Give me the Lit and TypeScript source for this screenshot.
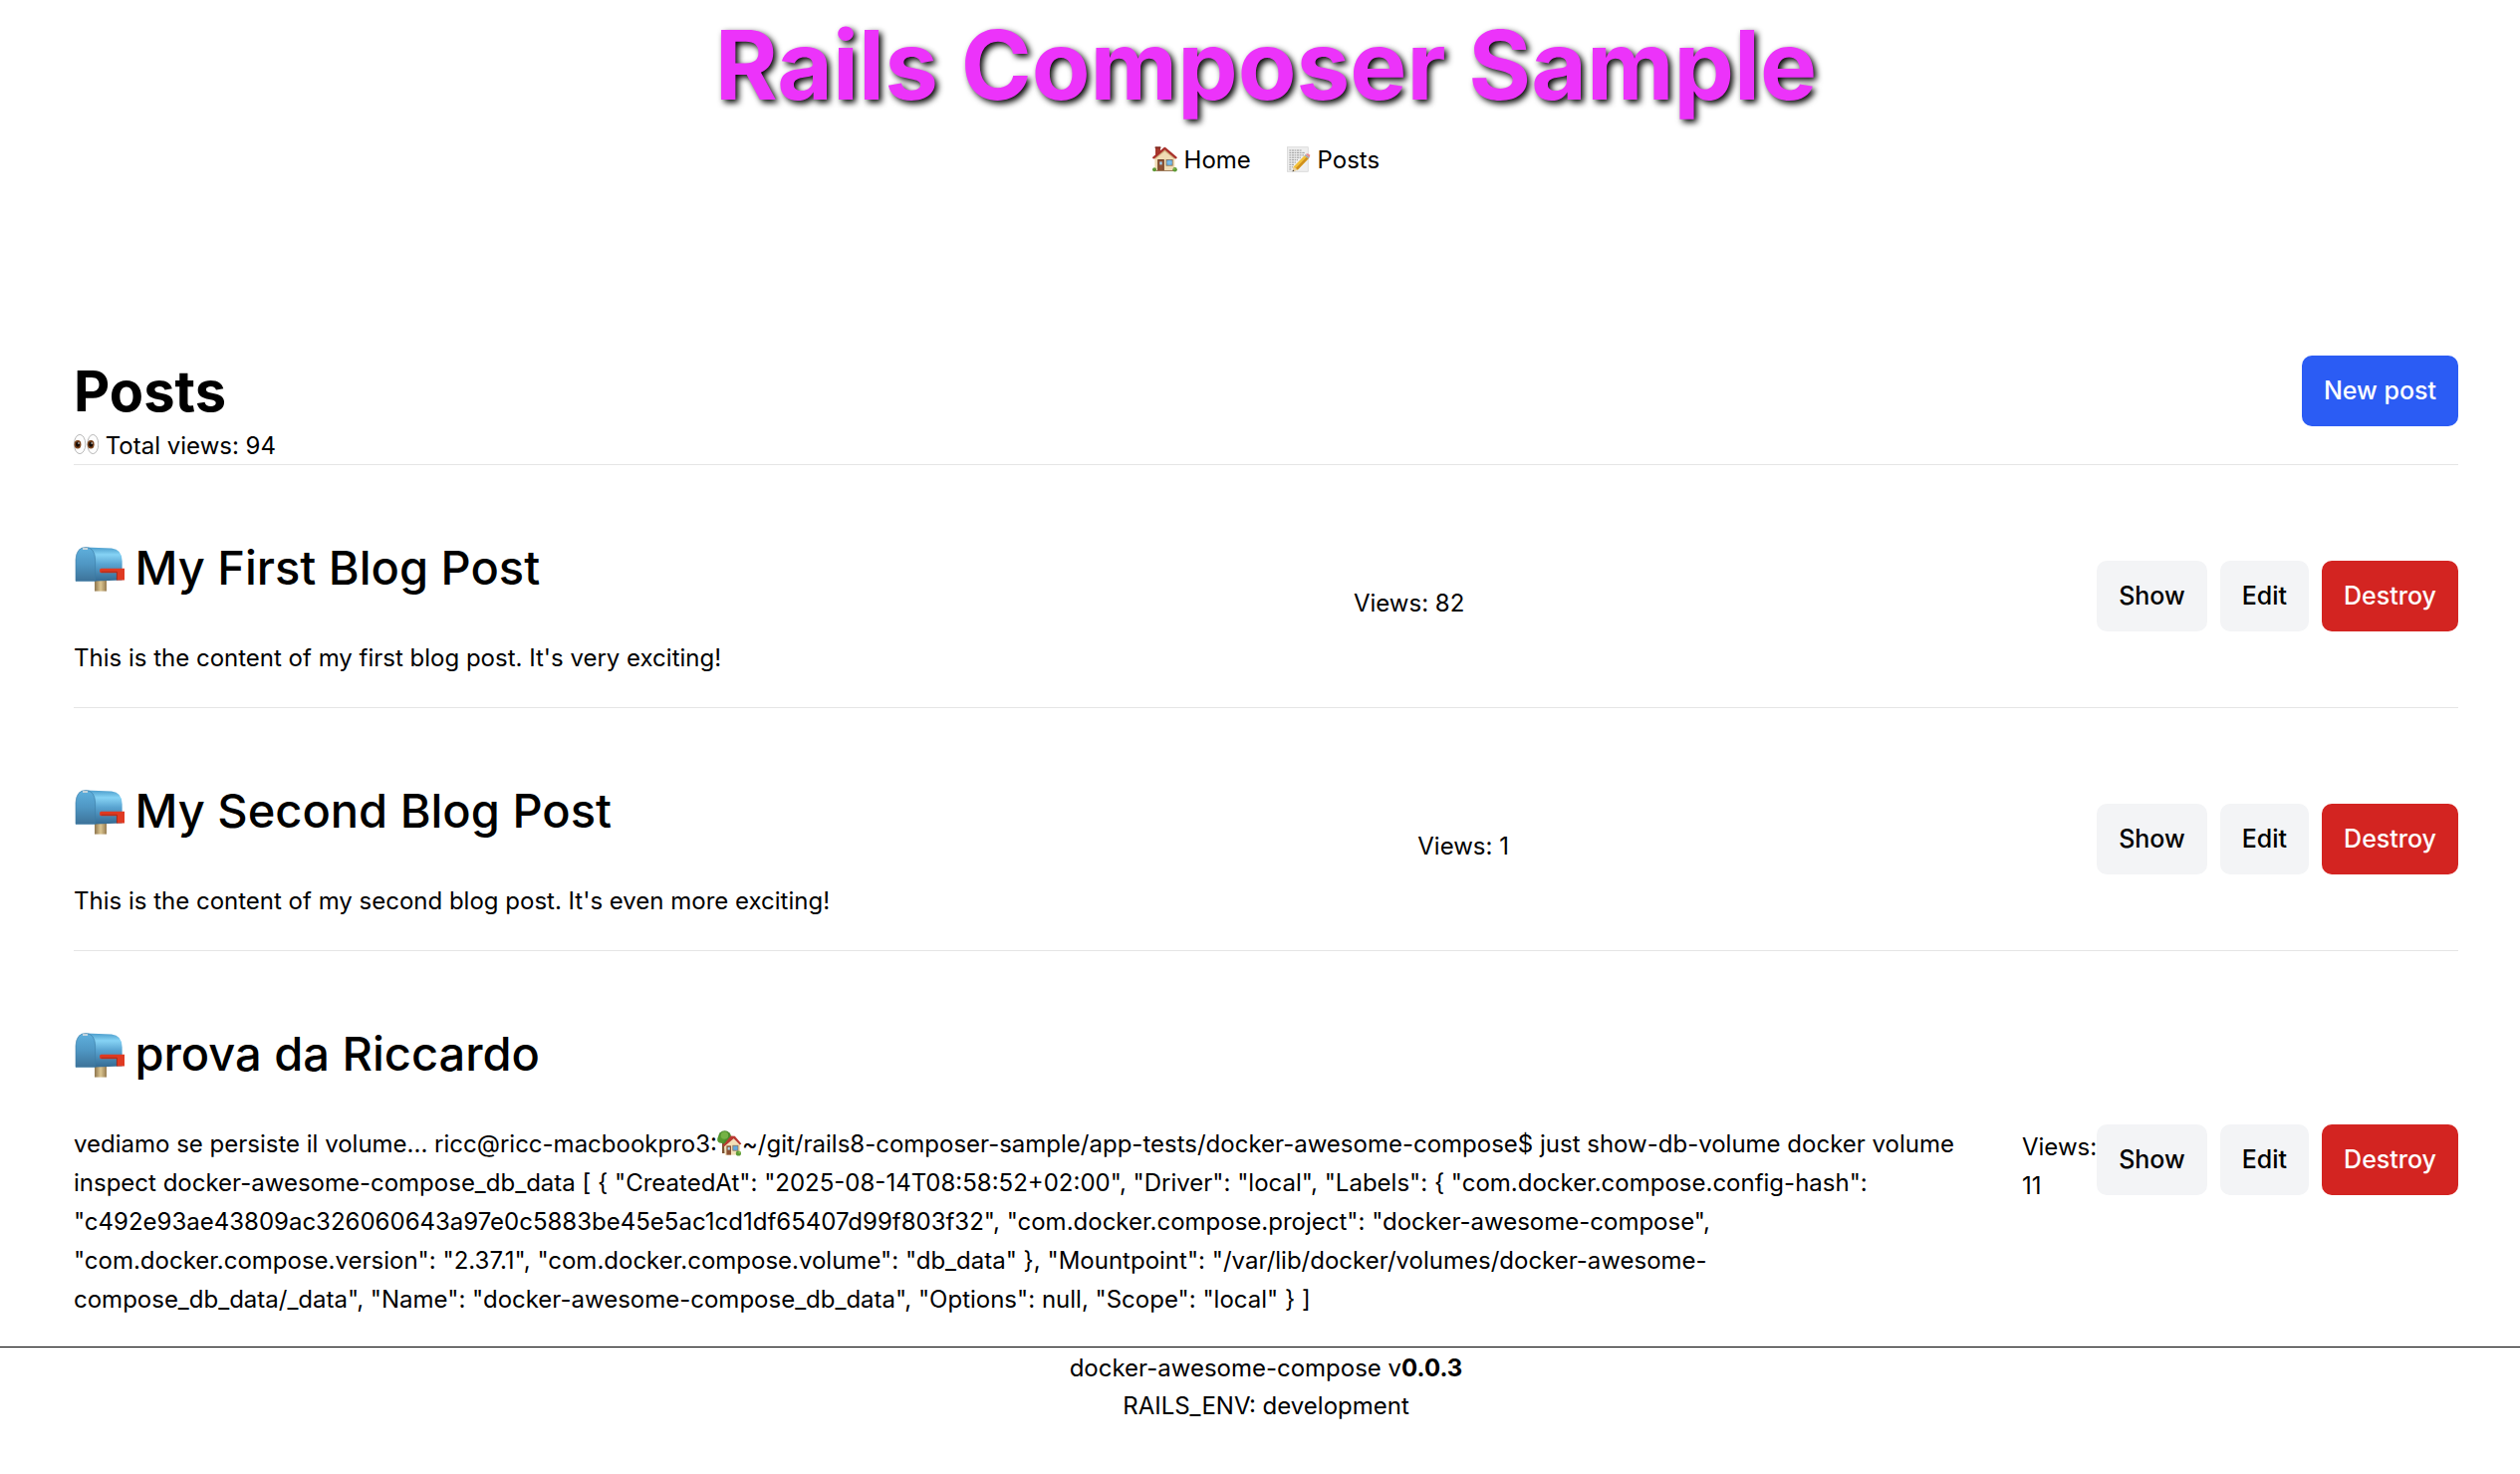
import { LitElement, html, css, svg, nothing } from "lit";
import { customElement, property } from "lit/decorators.js";

interface Post {
  title: string;
  body: string;
  bodyAfterIcon?: string;
  views: number;
}

const posts: Post[] = [
  {
    title: "My First Blog Post",
    body: "This is the content of my first blog post. It's very exciting!",
    views: 82,
  },
  {
    title: "My Second Blog Post",
    body: "This is the content of my second blog post. It's even more exciting!",
    views: 1,
  },
  {
    title: "prova da Riccardo",
    body: "vediamo se persiste il volume... ricc@ricc-macbookpro3:",
    bodyAfterIcon:
      '~/git/rails8-composer-sample/app-tests/docker-awesome-compose$ just show-db-volume docker volume inspect docker-awesome-compose_db_data [ { "CreatedAt": "2025-08-14T08:58:52+02:00", "Driver": "local", "Labels": { "com.docker.compose.config-hash": "c492e93ae43809ac326060643a97e0c5883be45e5ac1cd1df65407d99f803f32", "com.docker.compose.project": "docker-awesome-compose",\n"com.docker.compose.version": "2.37.1", "com.docker.compose.volume": "db_data" }, "Mountpoint": "/var/lib/docker/volumes/docker-awesome-\ncompose_db_data/_data", "Name": "docker-awesome-compose_db_data", "Options": null, "Scope": "local" } ]',
    views: 11,
  },
];

const houseShape = svg`
  <rect x="3" y="0.6" width="5" height="8" fill="#a5382c"/>
  <rect x="2.6" y="0.4" width="5.8" height="1.6" fill="#7f2a22"/>
  <path d="M2.4 11.2 12.4 2.6 22.4 11.2V24.6H2.4Z" fill="#f0dcb4"/>
  <path d="M2.4 11.2 12.4 2.6 22.4 11.2V13L12.4 5 2.4 13Z" fill="#cfae7c"/>
  <path d="M1.2 11.4 12.4 1.8 23.6 11.4" fill="none" stroke="#a8302a" stroke-width="2.2" stroke-linejoin="round" stroke-linecap="round"/>
  <rect x="5.2" y="13" width="6.6" height="11.6" fill="#6d3b24"/>
  <rect x="6.2" y="14" width="4.6" height="10.6" fill="#8f5233"/>
  <rect x="7.3" y="15.4" width="2.4" height="3" fill="#9fd0f0"/>
  <rect x="13.6" y="13" width="7" height="6.6" fill="#8a6a4a"/>
  <rect x="14.4" y="13.8" width="5.4" height="5" fill="#69b0e4"/>
  <path d="M17.1 13.8V18.8M14.4 16.3H19.8" stroke="#8fc9ef" stroke-width="0.6"/>
  <rect x="3.4" y="24" width="18.4" height="1" fill="#9c7b5a"/>`;

const house = html`<svg class="emoji" viewBox="0 0 25 26" aria-hidden="true">
  ${houseShape}
  <circle cx="2" cy="23.2" r="2" fill="#5d9a35"/>
  <circle cx="22.6" cy="23.2" r="2.2" fill="#5d9a35"/>
  <circle cx="22" cy="22.6" r="0.9" fill="#86c04f"/>
</svg>`;

const houseGarden = html`<svg class="emoji" viewBox="0 0 25 26" aria-hidden="true">
  <rect x="5" y="10" width="2.6" height="13" fill="#7c5232"/>
  <circle cx="7.6" cy="6.8" r="6.6" fill="#4b8b2c"/>
  <circle cx="4" cy="9" r="3.8" fill="#55982f"/>
  <circle cx="7.4" cy="5" r="3.8" fill="#74b245"/>
  <path d="M7 15.4 14.6 6.4 23 14.4V24.4L8 24.8Z" fill="#f2e0b8"/>
  <path d="M5.8 15.2 13.6 5.6 17.8 5.8 24.4 13.6 22.8 14.6 16.6 8.2 7 16.2Z" fill="#b93a32"/>
  <rect x="9.4" y="15.4" width="4.6" height="9.2" fill="#8a4f30"/>
  <rect x="10.6" y="16.8" width="2.2" height="2.8" fill="#a9d4ef"/>
  <rect x="15.8" y="15.2" width="5.2" height="5" fill="#5fa7df" stroke="#8a6a4a" stroke-width="0.7"/>
  <circle cx="21.4" cy="23" r="2.6" fill="#5d9a35"/>
  <circle cx="22.4" cy="22.2" r="1.1" fill="#86c04f"/>
</svg>`;

const memo = html`<svg class="emoji" viewBox="0 0 25 26" aria-hidden="true">
  <rect x="1" y="0.4" width="21.6" height="25.2" fill="#e9e9e9"/>
  <rect x="1.4" y="0.8" width="20.8" height="24.4" fill="#eeeeee" stroke="#d2d2d2" stroke-width="0.6"/>
  <g stroke="#8e8e8e" stroke-width="0.9" stroke-dasharray="1.6 0.7 2.4 0.6">
    <path d="M3.4 4H16"/><path d="M3.4 6.4H19"/><path d="M3.4 8.8H18"/><path d="M3.4 11.2H15"/>
    <path d="M3.4 13.6H12"/><path d="M3.4 16H10"/><path d="M3.4 18.4H8"/><path d="M3.4 20.8H7"/><path d="M3.4 23H6"/>
  </g>
  <path d="M7.6 20.4 18.6 9.2 22.6 12.2 11.8 23.6 7 25Z" fill="#f3c13a"/>
  <path d="M9.8 22 20.6 10.8 22.6 12.2 11.8 23.6Z" fill="#cf8f1c"/>
  <path d="M7.6 20.4 11.8 23.6 6.6 25.2Z" fill="#e9cfa0"/>
  <path d="M6.6 25.2 7 23.6 8.4 24.7Z" fill="#333"/>
  <path d="M18.6 9.2 19.8 8 23.8 11 22.6 12.2Z" fill="#9aa5ad"/>
  <path d="M19.8 8Q21.6 6.6 23.6 8.2 24.8 9.6 23.8 11Z" fill="#e88a8e"/>
</svg>`;

const eyes = html`<svg class="emoji" viewBox="0 0 25 26" aria-hidden="true">
  <ellipse cx="6.1" cy="12" rx="5.7" ry="9.6" fill="#fdfdfd" stroke="#b0b0b0" stroke-width="0.9"/>
  <ellipse cx="19.3" cy="12" rx="5.5" ry="9.6" fill="#fdfdfd" stroke="#b0b0b0" stroke-width="0.9"/>
  <ellipse cx="4" cy="12.2" rx="3.4" ry="4.2" fill="#7a431c"/>
  <ellipse cx="17.2" cy="12.2" rx="3.4" ry="4.2" fill="#7a431c"/>
  <ellipse cx="4" cy="12.2" rx="2" ry="2.6" fill="#120a06"/>
  <ellipse cx="17.2" cy="12.2" rx="2" ry="2.6" fill="#120a06"/>
  <circle cx="5" cy="11" r="0.8" fill="#fff"/>
  <circle cx="18.2" cy="11" r="0.8" fill="#fff"/>
</svg>`;

const mailbox = html`<svg class="emoji-large" viewBox="0 0 52 48" aria-hidden="true">
  <defs>
    <linearGradient id="side" x1="0" y1="0" x2="0" y2="1">
      <stop offset="0" stop-color="#4b9ccb"/><stop offset="0.22" stop-color="#86d3f5"/>
      <stop offset="0.5" stop-color="#5aa5d2"/><stop offset="1" stop-color="#356a92"/>
    </linearGradient>
    <linearGradient id="door" x1="0" y1="0" x2="0" y2="1">
      <stop offset="0" stop-color="#5fb0dd"/><stop offset="0.5" stop-color="#4f97c4"/><stop offset="1" stop-color="#3d7399"/>
    </linearGradient>
    <linearGradient id="post" x1="0" y1="0" x2="1" y2="0">
      <stop offset="0" stop-color="#8d744c"/><stop offset="0.5" stop-color="#dcc691"/><stop offset="1" stop-color="#967b50"/>
    </linearGradient>
  </defs>
  <rect x="21" y="34" width="12" height="12.6" fill="url(#post)"/>
  <path d="M12 2.4 38 3.4Q48.6 4.6 48.6 16V35.6L21 36.4Z" fill="url(#side)"/>
  <path d="M2 36.4V15Q2.6 2.6 12 2.4 21.4 3 21.6 15V36.4Z" fill="url(#door)" stroke="#3a7ba5" stroke-width="0.6"/>
  <path d="M9 2.8H14V5H9Z" fill="#c3d3dc"/>
  <path d="M27.6 23.8H51V35.4H43.4V28.2H27.6Q26 28.2 26 26 26 23.8 27.6 23.8Z" fill="#df3a22"/>
  <path d="M27.6 27.2H43.4V35.4" fill="none" stroke="#a82a1a" stroke-width="1"/>
</svg>`;

@customElement("post-row")
export class PostRow extends LitElement {
  @property({ attribute: false }) post!: Post;

  static styles = css`
    :host {
      display: flex;
      align-items: center;
      justify-content: space-between;
      padding-top: 22px;
    }
    .content {
      padding: 43px 0 28px;
    }
    .title {
      margin: 0 0 33px;
      font-size: 47px;
      line-height: 76px;
      font-weight: 500;
    }
    .text {
      margin: 0;
      line-height: 39px;
      white-space: pre-line;
    }
    .emoji {
      width: 25px;
      height: 26px;
      vertical-align: -4px;
    }
    .emoji-large {
      width: 52px;
      height: 48px;
      margin-right: -3px;
      vertical-align: -8px;
    }
    .views {
      padding-top: 13px;
      line-height: 39px;
    }
    .actions {
      display: flex;
      gap: 13px;
    }
    .action {
      padding: 16px 22px;
      border: 0;
      border-radius: 10px;
      background: #f3f4f6;
      color: #000;
      font: inherit;
      font-size: 25px;
      font-weight: 500;
      line-height: 39px;
      text-decoration: none;
      cursor: pointer;
    }
    .danger {
      background: #d32421;
      color: #fff;
    }
  `;

  render() {
    const { title, body, bodyAfterIcon, views } = this.post;
    return html`
      <div class="content">
        <h2 class="title">${mailbox} ${title}</h2>
        <p class="text">${body}${bodyAfterIcon ? html`${houseGarden}${bodyAfterIcon}` : nothing}</p>
      </div>
      <div class="views">Views: ${views}</div>
      <div class="actions">
        <a class="action" href="#show">Show</a>
        <a class="action" href="#edit">Edit</a>
        <button class="action danger" type="button">Destroy</button>
      </div>
    `;
  }
}

@customElement("app-root")
export class AppRoot extends LitElement {
  static styles = css`
    :host {
      display: block;
      background: #fff;
      color: #000;
      font-family: Inter, "Liberation Sans", sans-serif;
      font-size: 24px;
      line-height: 38px;
    }
    .header,
    .footer {
      padding-left: 12px;
      text-align: center;
    }
    .header {
      padding-top: 15px;
    }
    .brand {
      margin: 0;
      font-size: 96px;
      line-height: 100px;
      font-weight: 700;
      color: #ec33fa;
      text-shadow: 3px 3px 6px #000;
    }
    .nav {
      display: flex;
      justify-content: center;
      gap: 35px;
      padding-top: 27px;
    }
    .link {
      color: inherit;
      text-decoration: none;
    }
    .emoji {
      width: 25px;
      height: 26px;
      vertical-align: -4px;
    }
    .main {
      padding: 177px 62px 0 74px;
    }
    .heading-row {
      display: flex;
      align-items: center;
      justify-content: space-between;
    }
    .heading {
      margin: 0;
      font-size: 56px;
      line-height: 64px;
      font-weight: 700;
    }
    .new-post {
      padding: 16px 22px;
      border-radius: 10px;
      background: #2b5cf4;
      color: #fff;
      font-size: 25px;
      font-weight: 500;
      line-height: 39px;
      text-decoration: none;
    }
    .total {
      margin: 0;
      padding-top: 2px;
      line-height: 36px;
    }
    .list {
      margin: 0;
      padding: 0;
      list-style: none;
    }
    .item {
      border-top: 1px solid #e5e5e5;
    }
    .item:not(:last-child) {
      padding-bottom: 2px;
    }
    .footer {
      padding-top: 2px;
      border-top: 1px solid #000;
    }
    .line {
      margin: 0;
    }
  `;

  render() {
    const total = posts.reduce((sum, post) => sum + post.views, 0);
    return html`
      <header class="header">
        <h1 class="brand">Rails Composer Sample</h1>
        <nav class="nav">
          <a class="link" href="#home">${house} Home</a>
          <a class="link" href="#posts">${memo} Posts</a>
        </nav>
      </header>
      <main class="main">
        <div class="heading-row">
          <h1 class="heading">Posts</h1>
          <a class="new-post" href="#new">New post</a>
        </div>
        <p class="total">${eyes} Total views: ${total}</p>
        <ul class="list">
          ${posts.map((post) => html`<li class="item"><post-row .post=${post}></post-row></li>`)}
        </ul>
      </main>
      <footer class="footer">
        <p class="line">docker-awesome-compose v<b>0.0.3</b></p>
        <p class="line">RAILS_ENV: development</p>
      </footer>
    `;
  }
}
